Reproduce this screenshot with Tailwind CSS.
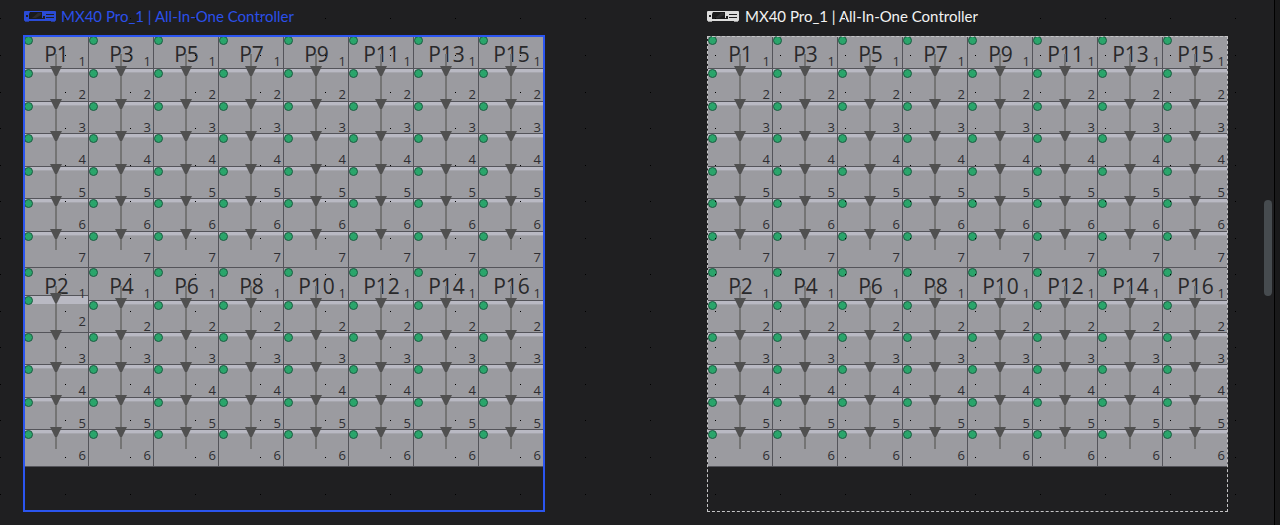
<!DOCTYPE html>
<html lang="en">
<head>
<meta charset="utf-8">
<meta name="viewport" content="width=device-width, initial-scale=1">
<title>Screen layout</title>
<script src="https://cdn.jsdelivr.net/npm/@tailwindcss/browser@4"></script>
</head>
<body class="bg-[#1f1f21] font-['Open_Sans',sans-serif]">
<main class="relative flex min-h-screen overflow-hidden">
  <div class="flex flex-1 items-start gap-[163px] pt-[7px] pl-[23px]" id="screens"></div>
  <aside class="flex w-4 shrink-0">
    <div class="w-2 pt-[200px]"><div class="h-24 w-2 rounded-full bg-[#464b4f]"></div></div>
    <div class="ml-0.5 flex-1 border-l border-black bg-[#19191a]"></div>
  </aside>
  <svg id="dots" class="pointer-events-none absolute inset-0 h-full w-full" shape-rendering="crispEdges" aria-hidden="true"></svg>
</main>

<template id="device">
  <svg class="h-[11px] w-8 shrink-0" viewBox="0 0 32 11" aria-hidden="true">
    <rect width="32" height="10" rx="1" fill="currentColor" opacity=".9"/>
    <rect x="1" y="10" width="4" height="1" fill="currentColor" opacity=".6"/>
    <rect x="27" y="10" width="4" height="1" fill="currentColor" opacity=".6"/>
    <rect x="2" y="4" width="2" height="2" fill="#1f1f21"/>
    <path d="M6 1h12v7H5V3z" fill="#1a1a1b"/>
    <path d="M8 7 14 2h3v2l-5 3z" fill="#2c2c2e"/>
    <path d="M18 7h3v1h-3zM19 5h2v2h-2zM22 3h8v1h-8zM22 6h8v1h-8z" fill="#1f1f21"/>
  </svg>
</template>

<script>
const upper = [33, 33, 32, 33, 32, 33, 36];
const lower = [33, 32, 32, 33, 32, 37];
const tallTint = '<i class="absolute inset-x-0 top-0 h-2 bg-[#b9b9c3]"></i>';
const thinTint = '<i class="absolute inset-x-0 top-0 h-1 border-b border-[#a6a6ad] bg-[#b9b9c3]"></i>';

function port(number, heights, shifted) {
  const arrows = [];
  const numbers = [];
  let y = 0;
  const cells = heights.map((h, i) => {
    const plain = i === 0 || (shifted && i === 2);
    const tint = plain ? '' : shifted && i === 1 ? tallTint : thinTint;
    if (i) arrows.push(y);
    numbers.push(`<span class="absolute right-[3px] text-[13px] leading-[14px] text-[#2e2e32]" style="top:${y + 18}px">${i + 1}</span>`);
    y += h;
    return `<li class="relative border-r border-b border-[#54545a] bg-[#9b9ba0]" style="height:${h}px">${tint}
      <i class="absolute top-0 left-0 size-[9px] rounded-full border border-[#1d5b42] bg-[#2aa56b]"></i></li>`;
  }).join('');
  const marks = arrows.map(a => `<path d="M26 ${a - 3}h12l-5 10h-2z" fill="#505050"/>`).join('');
  return `<section class="relative w-[65px]">
    <ol>${cells}</ol>${numbers.join('')}
    <h3 class="absolute inset-x-0 top-1.5 text-center text-[21px] leading-6 text-[#29292b]">P${number}</h3>
    <svg class="absolute top-0 left-0 w-[65px]" height="${y}" aria-hidden="true">
      <path d="M32 18V${y - 18}" stroke="#747474" stroke-width="2"/>${marks}</svg>
  </section>`;
}

function screen(selected) {
  const row = (first, heights) => `<div class="flex">${Array.from({length: 8}, (_, i) => {
    const n = first + i * 2;
    const shifted = selected && n === 2;
    return port(n, shifted ? [28, 37, ...heights.slice(2)] : heights, shifted);
  }).join('')}</div>`;
  const frame = selected ? '-top-px -right-px border-2 border-[#2b55f0]' : 'top-0 right-0 border border-dashed border-[#c4c4c6]';
  const head = selected ? 'gap-[5px] pl-px text-[#2b50ea]' : 'gap-1.5 text-[#f2f2f2]';
  return `<article>
    <h2 class="flex h-[19px] items-center font-['Lato',sans-serif] text-[15px] leading-[19px] whitespace-nowrap ${head}">
      ${document.getElementById('device').innerHTML}<span>MX40 Pro_1 | All-In-One Controller</span></h2>
    <div class="relative mt-[10px] pb-[45px] pl-px">${row(1, upper)}${row(2, lower)}
      <div class="absolute bottom-0 left-0 ${frame}"></div></div>
  </article>`;
}
document.getElementById('screens').innerHTML = screen(true) + screen(false);

let marks = '';
for (let r = 0; r < 30; r++)
  for (let c = 0; c < 60; c++)
    marks += `<rect x="${c * 65}" y="${Math.floor(18.9 + r * 36.55)}" width="1" height="1"/>`;
document.getElementById('dots').innerHTML = marks;
</script>
</body>
</html>
